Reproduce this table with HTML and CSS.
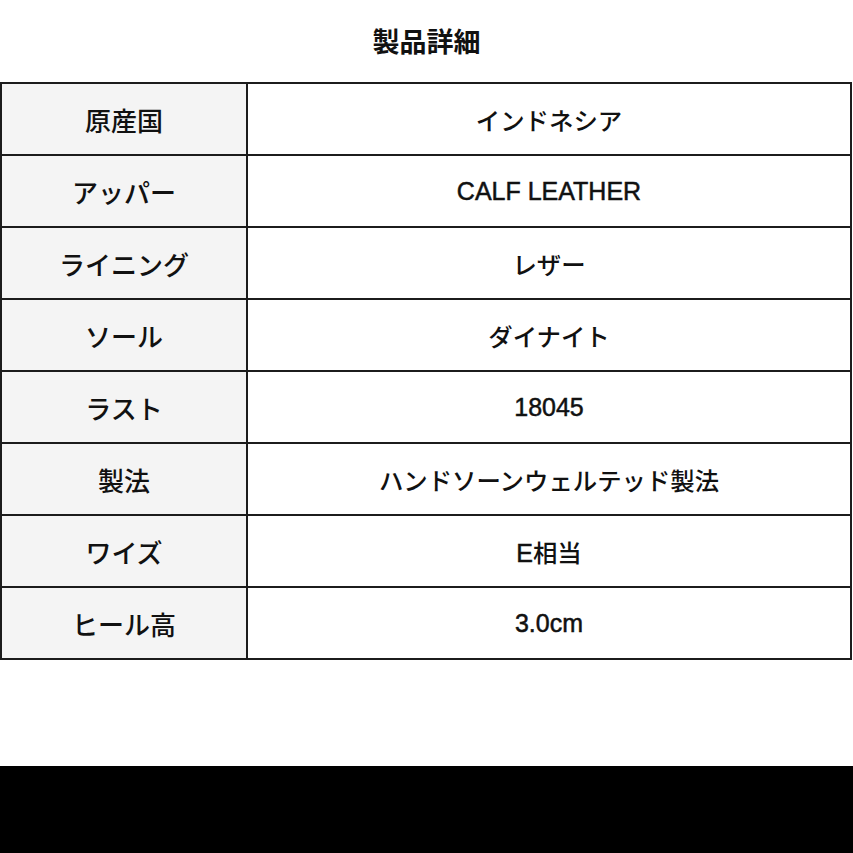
FILE: index.html
```html
<!DOCTYPE html>
<html lang="ja">
<head>
<meta charset="utf-8">
<link rel="stylesheet" href="styles.css">
</head>
<body>
<div class="page">
  <header class="title">製品詳細</header>
  <table class="spec">
    <tr><th>原産国</th><td>インドネシア</td></tr>
    <tr><th>アッパー</th><td><span class="latin">CALF LEATHER</span></td></tr>
    <tr><th>ライニング</th><td>レザー</td></tr>
    <tr><th>ソール</th><td>ダイナイト</td></tr>
    <tr><th>ラスト</th><td><span class="latin">18045</span></td></tr>
    <tr><th>製法</th><td>ハンドソーンウェルテッド製法</td></tr>
    <tr><th>ワイズ</th><td><span class="latin">E</span>相当</td></tr>
    <tr><th>ヒール高</th><td><span class="latin">3.0cm</span></td></tr>
  </table>
  <div class="spacer"></div>
  <footer class="bar"></footer>
</div>
</body>
</html>
```
FILE: styles.css
```css
html, body {
  margin: 0;
  padding: 0;
  background: #ffffff;
}
.page {
  width: 853px;
  height: 853px;
  display: flex;
  flex-direction: column;
  font-family: "Liberation Sans", "Noto Sans CJK JP", sans-serif;
  color: #111111;
}
.title {
  height: 82px;
  display: flex;
  align-items: center;
  justify-content: center;
  font-size: 27px;
  font-weight: 700;
  padding-bottom: 2px;
  box-sizing: border-box;
}
.spec {
  border-collapse: collapse;
  width: 852px;
  table-layout: fixed;
}
.spec th, .spec td {
  border: 2px solid #1c1c1c;
  height: 70px;
  padding: 0;
  text-align: center;
  vertical-align: middle;
  font-weight: 500;
}
.spec th {
  width: 244px;
  background: #f4f4f4;
  font-size: 26px;
}
.spec td {
  background: #ffffff;
  font-size: 24.4px;
}
.latin {
  font-size: 25px;
  -webkit-text-stroke: 0.5px #111111;
}
.spacer {
  flex: 1;
}
.bar {
  height: 87px;
  background: #000000;
}
```
